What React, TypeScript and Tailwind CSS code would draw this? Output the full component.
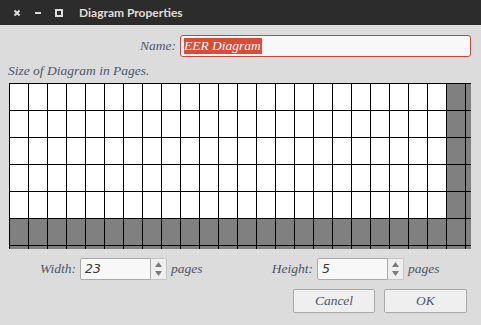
import React from "react";

const COLS = 25;
const ROWS = 7;
const WIDTH = 23;
const HEIGHT = 5;

const serif = "font-['Liberation_Serif',serif] italic";

const Spinner = () => (
    <div className="w-[16px] h-[22px] bg-[#efefef] border border-l-0 border-[#c4c4c4] rounded-r-[2px] flex flex-col items-center justify-between py-[3px]">
        <svg width="7" height="5" viewBox="0 0 7 5">
            <path d="M3.5 0 L7 5 L0 5 Z" fill="#7a7a7a" />
        </svg>
        <svg width="7" height="5" viewBox="0 0 7 5">
            <path d="M0 0 L7 0 L3.5 5 Z" fill="#7a7a7a" />
        </svg>
    </div>
);

const NumberField = ({ value }: { value: string }) => (
    <div className="flex">
        <div className="w-[71px] h-[22px] bg-[#f8f8f8] border border-[#a9a9a9] rounded-l-[2px] pl-[4px] flex items-center text-[12.5px] text-[#3a3a3a] font-['DejaVu_Sans',sans-serif]">
            {value}
        </div>
        <Spinner />
    </div>
);

const App = () => {
    const cells = [];
    for (let r = 0; r < ROWS; r++) {
        for (let c = 0; c < COLS; c++) {
            const used = r < HEIGHT && c < WIDTH;
            cells.push(
                <div
                    key={`${r}-${c}`}
                    className={
                        used
                            ? "w-[19px] h-[27px] border-l border-t border-black bg-white"
                            : "w-[19px] h-[27px] border-l border-t border-black bg-[#808080]"
                    }
                />
            );
        }
    }

    return (
        <main className="w-[481px] h-[325px] bg-[#dcdcdc] flex flex-col overflow-hidden">
            {/* Title bar */}
            <header className="h-[25px] bg-[#2c2c2c] flex items-center">
                <svg width="8" height="8" viewBox="0 0 8 8" className="ml-[13px]">
                    <path d="M1.5 1.5 L6.5 6.5 M6.5 1.5 L1.5 6.5" stroke="#dcdcdc" strokeWidth="2" />
                </svg>
                <svg width="8" height="8" viewBox="0 0 8 8" className="ml-[13px]">
                    <path d="M1 4 L7 4" stroke="#dcdcdc" strokeWidth="2" />
                </svg>
                <svg width="8" height="8" viewBox="0 0 8 8" className="ml-[13px]">
                    <rect x="1" y="1" width="6" height="6" fill="none" stroke="#dcdcdc" strokeWidth="2" />
                </svg>
                <span className="ml-[16px] text-[12px] font-bold text-[#e0ddd6] font-['Lato',sans-serif]">
                    Diagram Properties
                </span>
            </header>

            {/* Name */}
            <div className={`mt-[10px] h-[22px] flex items-center text-[13.5px] text-[#4c5567] ${serif}`}>
                <span className="w-[176px] text-right">Name:</span>
                <div className="ml-[4px] w-[291px] h-[22px] border border-[#c9453a] rounded-[3px] bg-[#f8f8f8] flex items-center pl-[3px]">
                    <span className="bg-[#dc4b34] text-white h-[16px] leading-[16px] pr-[1px]">EER Diagram</span>
                </div>
            </div>

            <p className={`mt-[6px] ml-[8px] h-[16px] leading-[16px] text-[13.5px] text-[#4c5567] ${serif}`}>
                Size of Diagram in Pages.
            </p>

            {/* Page grid */}
            <div className="mt-[4px] ml-[9px] w-[462px] h-[166px] overflow-hidden">
                <div className="grid grid-cols-[repeat(25,19px)] w-max">{cells}</div>
            </div>

            {/* Width / Height */}
            <div className={`mt-[9px] h-[22px] flex items-center text-[13.5px] text-[#4c5567] ${serif}`}>
                <span className="w-[76px] text-right">Width:</span>
                <div className="ml-[4px]">
                    <NumberField value="23" />
                </div>
                <span className="ml-[4px] w-[60px]">pages</span>
                <span className="w-[82px] text-right">Height:</span>
                <div className="ml-[4px]">
                    <NumberField value="5" />
                </div>
                <span className="ml-[4px]">pages</span>
            </div>

            {/* Buttons */}
            <div className={`mt-[9px] h-[24px] flex text-[13.5px] text-[#4c5567] ${serif}`}>
                <button className="ml-[293px] w-[82px] h-[24px] bg-[#efefef] border border-[#a9a9a9] rounded-[2px]">
                    Cancel
                </button>
                <button className="ml-[9px] w-[83px] h-[24px] bg-[#efefef] border border-[#a9a9a9] rounded-[2px]">
                    OK
                </button>
            </div>
        </main>
    );
};

export default App;
